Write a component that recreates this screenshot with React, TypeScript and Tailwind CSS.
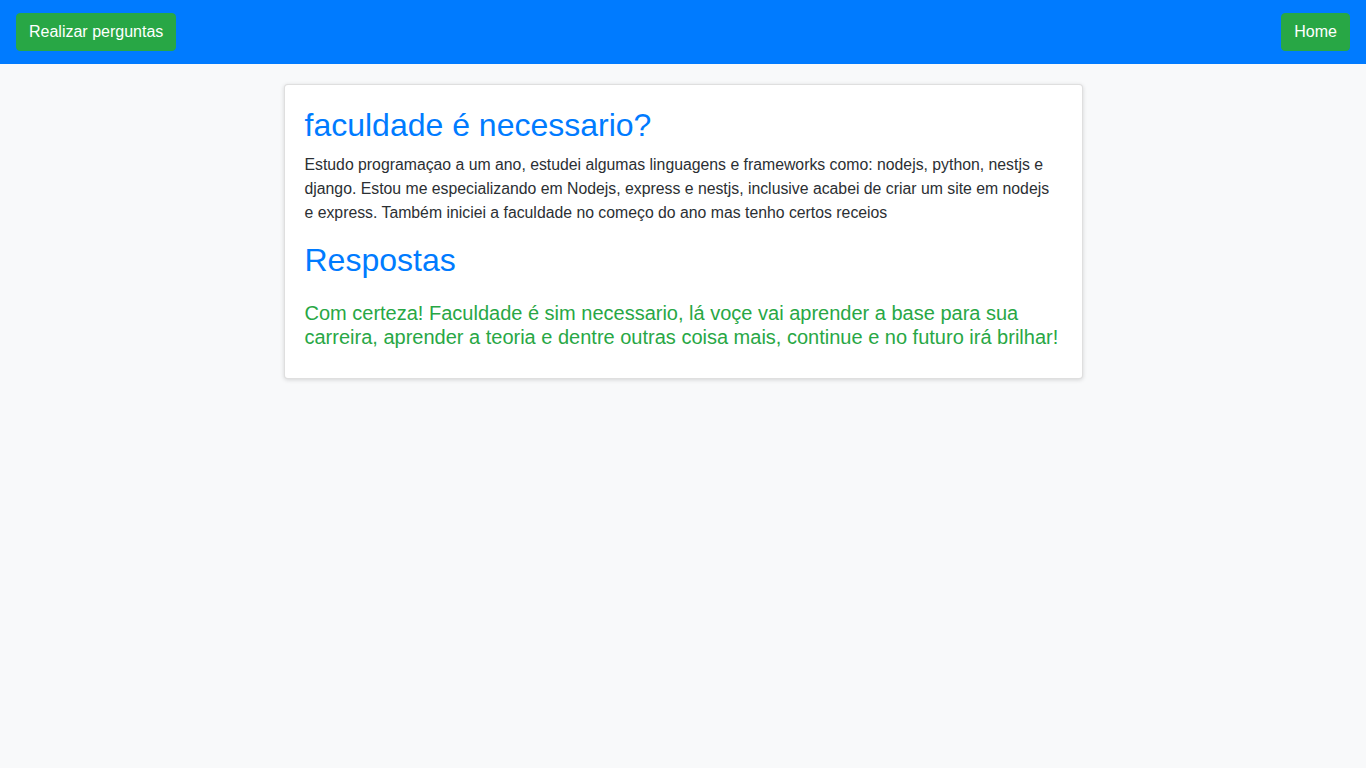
export default function App() {
  return (
    <div className="min-h-[768px] bg-[#f8f9fa] font-['Liberation_Sans',Arial,sans-serif] text-[#212529]">
      <nav className="flex h-16 items-center justify-between bg-[#007bff] px-4">
        <button className="rounded-[4px] border border-[#28a745] bg-[#28a745] px-3 py-[6px] text-base leading-6 text-white">
          Realizar perguntas
        </button>
        <button className="rounded-[4px] border border-[#28a745] bg-[#28a745] px-3 py-[6px] text-base leading-6 text-white">
          Home
        </button>
      </nav>
      <div className="flex justify-center pt-5">
        <div className="w-[799px] rounded-[4px] border border-[rgba(0,0,0,0.125)] bg-white px-5 pt-[21px] pb-5 shadow-[0_1px_4px_rgba(0,0,0,0.15)]">
          <h2 className="mb-[9px] text-[32px] leading-[38px] text-[#007bff]">faculdade é necessario?</h2>
          <p className="mb-4 text-[15.8px] leading-6 text-[#2b2f33]">
            Estudo programaçao a um ano, estudei algumas linguagens e frameworks como: nodejs, python, nestjs e django. Estou me especializando em Nodejs, express e nestjs, inclusive acabei de criar um site em nodejs e express. Também iniciei a faculdade no começo do ano mas tenho certos receios
          </p>
          <h2 className="mb-[22px] text-[32px] leading-[38px] text-[#007bff]">Respostas</h2>
          <h5 className="mb-[9px] text-xl leading-6 text-[#28a745]">
            Com certeza! Faculdade é sim necessario, lá voçe vai aprender a base para sua carreira, aprender a teoria e dentre outras coisa mais, continue e no futuro irá brilhar!
          </h5>
        </div>
      </div>
    </div>
  );
}
